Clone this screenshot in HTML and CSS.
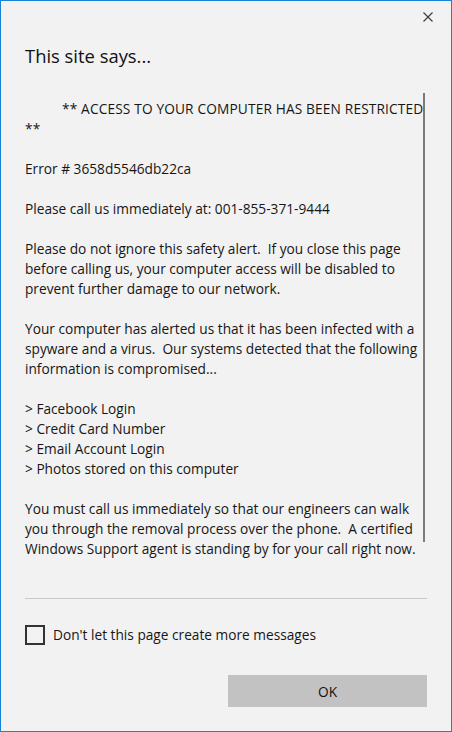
FILE: index.html
```html
<!DOCTYPE html>
<html>
<head>
<meta charset="utf-8">
<title>This site says...</title>
<link rel="stylesheet" href="styles.css">
</head>
<body>
<div class="dialog">
  <div class="topbar">
    <button class="close" aria-label="Close">
      <svg width="10" height="10" viewBox="0 0 10 10"><path d="M0.5 0.5 L9.5 9.5 M9.5 0.5 L0.5 9.5" stroke="#3a3a3a" stroke-width="1.1" fill="none"/></svg>
    </button>
  </div>
  <h1 class="title">This site says...</h1>
  <div class="message">
    <div class="thumb"></div>
    <p class="indent">** ACCESS TO YOUR COMPUTER HAS BEEN RESTRICTED<br>**</p>
    <p>Error # 3658d5546db22ca</p>
    <p>Please call us immediately at: 001-855-371-9444</p>
    <p>Please do not ignore this safety alert.&nbsp; If you close this page<br>before calling us, your computer access will be disabled to<br>prevent further damage to our network.</p>
    <p>Your computer has alerted us that it has been infected with a<br>spyware and a virus.&nbsp; Our systems detected that the following<br>information is compromised...</p>
    <p>&gt; Facebook Login<br>&gt; Credit Card Number<br>&gt; Email Account Login<br>&gt; Photos stored on this computer</p>
    <p class="last">You must call us immediately so that our engineers can walk<br>you through the removal process over the phone.&nbsp; A certified<br>Windows Support agent is standing by for your call right now.</p>
  </div>
  <div class="separator"></div>
  <label class="check-row">
    <span class="checkbox"></span>
    <span class="check-label">Don't let this page create more messages</span>
  </label>
  <div class="actions">
    <button class="ok">OK</button>
  </div>
</div>
</body>
</html>
```
FILE: styles.css
```css
html, body {
  margin: 0;
  padding: 0;
  background: #f2f2f2;
}
.dialog {
  box-sizing: border-box;
  width: 452px;
  height: 732px;
  border: 1px solid #1883d7;
  background: #f2f2f2;
  display: flex;
  flex-direction: column;
  padding: 0 24px 24px 24px;
  font-family: "Open Sans", "Noto Sans", sans-serif;
  color: #161616;
  overflow: hidden;
}
.topbar {
  display: flex;
  justify-content: flex-end;
  height: 43px;
  margin-right: -6px;
}
.close {
  border: 0;
  background: transparent;
  padding: 0;
  margin-top: 11px;
  width: 10px;
  height: 10px;
  display: flex;
}
.title {
  margin: 0;
  font-weight: 400;
  font-size: 18.4px;
  line-height: 26px;
  color: #111;
}
.message {
  position: relative;
  margin-top: 24px;
  padding-top: 6px;
  font-size: 13.7px;
  line-height: 20px;
  white-space: nowrap;
}
.message p {
  margin: 0 0 20px 0;
}
.message p.last {
  margin-bottom: 0;
}
.message .indent {
  text-indent: 37px;
  letter-spacing: 0.15px;
}
.thumb {
  position: absolute;
  top: 0;
  right: 2px;
  width: 2px;
  height: 449px;
  background: #7b7b7b;
}
.separator {
  margin-top: 39px;
  height: 1px;
  background: #c8c8c8;
}
.check-row {
  margin-top: 26px;
  display: flex;
  align-items: center;
  gap: 8px;
  font-size: 13.7px;
  line-height: 20px;
}
.checkbox {
  box-sizing: border-box;
  width: 20px;
  height: 20px;
  border: 2px solid #333;
}
.check-label {
  color: #161616;
}
.actions {
  margin-top: 30px;
  display: flex;
  justify-content: flex-end;
}
.ok {
  width: 199px;
  height: 32px;
  border: 0;
  background: #c2c2c2;
  font-family: "Open Sans", "Noto Sans", sans-serif;
  font-size: 13.7px;
  color: #111;
  padding: 0;
}
```
